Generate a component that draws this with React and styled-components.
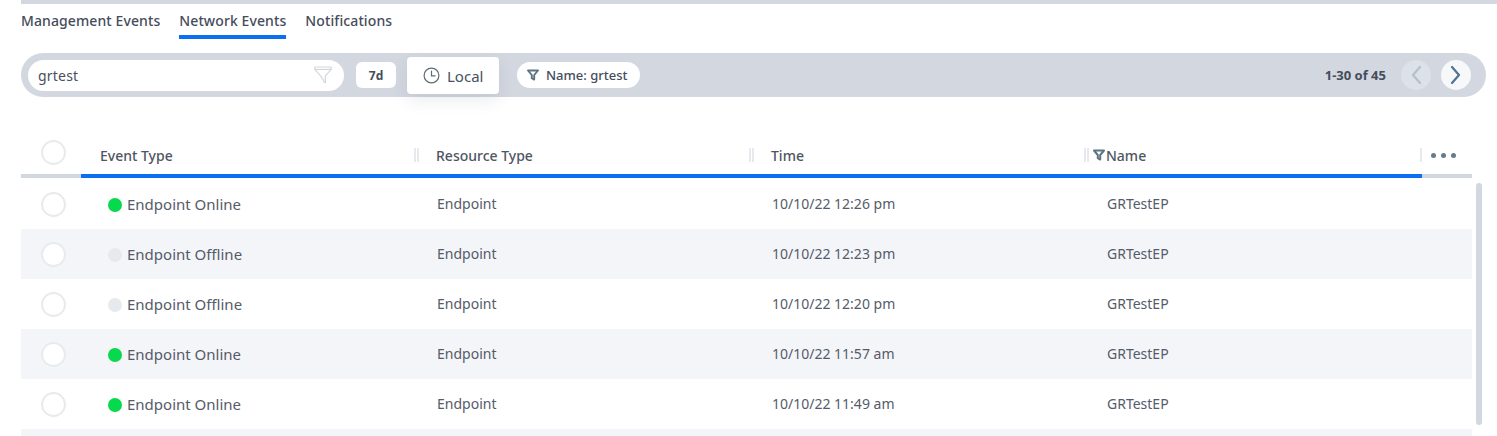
import React from 'react'
import styled, { createGlobalStyle } from 'styled-components'

const rows = [
  { online: true, time: '10/10/22 12:26 pm' },
  { online: false, time: '10/10/22 12:23 pm' },
  { online: false, time: '10/10/22 12:20 pm' },
  { online: true, time: '10/10/22 11:57 am' },
  { online: true, time: '10/10/22 11:49 am' },
]

const GlobalStyle = createGlobalStyle`
  html, body {
    margin: 0;
    height: 436px;
    overflow: hidden;
    background: #fff;
    font-family: "Noto Sans", "Open Sans", sans-serif;
    color: #4a5060;
  }
  * { box-sizing: border-box; }
`

const FunnelIcon = ({ size = 12, color = '#5d7482', stroke = 2, fill = 'none' }) =>
  <svg width={size} height={size} viewBox="0 0 12 12" fill={fill} stroke={color} strokeWidth={stroke} strokeLinejoin="round">
    <path d="M1 1.5h10L7.2 6v4.6L4.8 9.2V6z" />
  </svg>

const SearchFunnel = () =>
  <svg width="18" height="18" viewBox="0 0 18 18" fill="none" stroke="#d3d7dc" strokeWidth="1.2" strokeLinejoin="round">
    <path d="M.8 1h16.4v2.4l-5.8 6.4v7l-1.6-1-.6-2.4-1.2-1-1.4-2.6L.8 3.4z" />
    <path d="M.8 3.4h16.4" />
  </svg>

const ClockIcon = () =>
  <svg width="17" height="17" viewBox="0 0 17 17" fill="none" stroke="#5f6b78" strokeWidth="1.2" strokeLinecap="round">
    <circle cx="8.5" cy="8.5" r="7.4" />
    <path d="M8.5 4.2v4.6h3.6" />
  </svg>

const Chevron = ({ dir, color }) =>
  <svg width="12" height="20" viewBox="0 0 12 20" fill="none" stroke={color} strokeWidth="2.2" strokeLinecap="round" strokeLinejoin="round">
    <path d={dir === 'left' ? 'M10 2L3 10l7 8' : 'M2 2l7 8-7 8'} />
  </svg>

const App = () =>
  <Page>
    <GlobalStyle />
    <TopRule />
    <Tabs>
      <Tab>Management Events</Tab>
      <Tab active>Network Events</Tab>
      <Tab>Notifications</Tab>
    </Tabs>
    <Toolbar>
      <Search>
        <SearchText>grtest</SearchText>
        <SearchFunnel />
      </Search>
      <RangeButton>7d</RangeButton>
      <ZoneButton><ClockIcon />Local</ZoneButton>
      <FilterChip><FunnelIcon size={12} color="#5d7482" stroke={1.9} />Name: grtest</FilterChip>
      <Pager>
        <PageCount>1-30 of 45</PageCount>
        <PageButton disabled><Chevron dir="left" color="#b5c0ca" /></PageButton>
        <PageButton><Chevron dir="right" color="#4f7390" /></PageButton>
      </Pager>
    </Toolbar>
    <HeaderRow>
      <HeaderCheck><Check /></HeaderCheck>
      <HeaderCell>Event Type<Grip /></HeaderCell>
      <HeaderCell>Resource Type<Grip /></HeaderCell>
      <HeaderCell>Time<Grip /></HeaderCell>
      <HeaderCell filtered>
        <HeaderFunnel><FunnelIcon size={12} color="#5d7482" stroke={2} /></HeaderFunnel>
        Name<Grip single />
      </HeaderCell>
      <MoreCell><Dot /><Dot /><Dot /></MoreCell>
    </HeaderRow>
    <HeaderRule><BlueRule /></HeaderRule>
    <Body>
      <Rows>
        {rows.map((row, i) =>
          <Row key={i}>
            <CheckCell><Check /></CheckCell>
            <TypeCell>
              <Status online={row.online} />
              {row.online ? 'Endpoint Online' : 'Endpoint Offline'}
            </TypeCell>
            <Cell>Endpoint</Cell>
            <Cell>{row.time}</Cell>
            <Cell>GRTestEP</Cell>
          </Row>
        )}
        <Row />
      </Rows>
      <Scrollbar />
    </Body>
  </Page>

export default App

const Page = styled.div`
  width: 1497px;
  height: 436px;
  padding: 0 11px 0 21px;
  overflow: hidden;
`

const TopRule = styled.div`
  height: 4px;
  margin-right: -11px;
  background: #d3d7e0;
`

const Tabs = styled.div`
  display: flex;
  gap: 19px;
  height: 35px;
  margin-bottom: 14px;
`

const Tab = styled.div`
  height: 35px;
  padding-top: 7px;
  font-size: 14px;
  line-height: 20px;
  font-weight: 500;
  letter-spacing: 0.1px;
  color: #454c5c;
  border-bottom: 4px solid ${p => p.active ? '#0a6ff0' : 'transparent'};
`

const Toolbar = styled.div`
  display: flex;
  align-items: center;
  width: 1465px;
  height: 44px;
  padding: 0 15px 0 7px;
  border-radius: 22px;
  background: #d3d7e0;
`

const Search = styled.div`
  display: flex;
  align-items: center;
  justify-content: space-between;
  width: 316px;
  height: 31px;
  padding: 0 12px 0 10px;
  border-radius: 16px;
  background: #fff;
`

const SearchText = styled.span`
  font-size: 14px;
  letter-spacing: 0.2px;
  color: #4a5060;
`

const RangeButton = styled.div`
  display: flex;
  align-items: center;
  justify-content: center;
  width: 40px;
  height: 26px;
  margin-left: 12px;
  border-radius: 6px;
  background: #fff;
  font-size: 12px;
  font-weight: 700;
  color: #454c5c;
`

const ZoneButton = styled.div`
  display: flex;
  align-items: center;
  gap: 7px;
  width: 92px;
  height: 37px;
  margin-left: 11px;
  padding: 1px 0 0 16px;
  border-radius: 4px;
  background: #fff;
  font-size: 15px;
  color: #4a5060;
  box-shadow: 0 6px 16px rgba(60, 70, 90, 0.1);
`

const FilterChip = styled.div`
  display: flex;
  align-items: center;
  gap: 7px;
  height: 26px;
  margin-left: 18px;
  padding: 0 12px 0 10px;
  border-radius: 13px;
  background: #fff;
  font-size: 13px;
  font-weight: 500;
  color: #454c5c;
`

const Pager = styled.div`
  display: flex;
  align-items: center;
  margin-left: auto;
`

const PageCount = styled.span`
  margin-right: 15px;
  font-size: 13px;
  font-weight: 700;
  color: #454c5c;
`

const PageButton = styled.button`
  display: flex;
  align-items: center;
  justify-content: center;
  width: 30px;
  height: 30px;
  margin-left: ${p => p.disabled ? 0 : '10px'};
  padding: 0;
  border: 0;
  border-radius: 50%;
  background: ${p => p.disabled ? '#dde1e8' : '#f6f8fa'};
`

const HeaderRow = styled.div`
  display: grid;
  grid-template-columns: 60px 336px repeat(3, 335px) 1fr;
  align-items: center;
  width: 1451px;
  height: 40px;
  margin-top: 37px;
`

const CheckCell = styled.div`
  display: flex;
  justify-content: center;
  padding-left: 4px;
`

const HeaderCheck = styled(CheckCell)`
  margin-top: -4px;
`

const Check = styled.span`
  display: block;
  width: 25px;
  height: 25px;
  border: 2px solid #e8ebee;
  border-radius: 50%;
  background: #fff;
`

const HeaderCell = styled.div`
  position: relative;
  display: flex;
  align-items: center;
  height: 18px;
  margin-top: 2px;
  padding-left: ${p => p.filtered ? '6px' : '19px'};
  font-size: 14px;
  font-weight: 500;
  color: #4f5563;
`

const HeaderFunnel = styled.span`
  display: flex;
  margin-right: 1px;
`

// column resize handle, sits over the cell's right edge
const Grip = styled.span`
  position: absolute;
  top: 2px;
  right: ${p => p.single ? 0 : '-2px'};
  width: ${p => p.single ? '2px' : '5px'};
  height: 14px;
  border-left: 2px solid #e6e9ed;
  border-right: ${p => p.single ? 0 : '2px solid #e6e9ed'};
`

const MoreCell = styled.div`
  display: flex;
  gap: 5px;
  padding-left: 9px;
  margin-top: 2px;
`

const Dot = styled.span`
  width: 5px;
  height: 5px;
  border-radius: 50%;
  background: #647c8a;
`

const HeaderRule = styled.div`
  width: 1451px;
  height: 4px;
  margin-bottom: 1px;
  padding-left: 60px;
  background: #d3d7e0;
`

const BlueRule = styled.div`
  width: 1341px;
  height: 4px;
  background: #0a6ff0;
`

const Body = styled.div`
  display: flex;
  align-items: flex-start;
  gap: 4px;
`

const Rows = styled.div`
  width: 1451px;
`

const Row = styled.div`
  display: grid;
  grid-template-columns: 60px repeat(3, 335px) 1fr;
  align-items: center;
  height: 50px;
  &:nth-child(even) {
    background: #f4f5f9;
  }
`

const Cell = styled.div`
  margin-top: -2px;
  padding-left: 21px;
  font-size: 14px;
  color: #555b69;
`

const TypeCell = styled.div`
  display: flex;
  align-items: center;
  gap: 5px;
  padding-left: 27px;
  font-size: 15px;
  color: #555b69;
`

const Status = styled.span`
  width: 14px;
  height: 14px;
  margin-top: 1px;
  border-radius: 50%;
  background: ${p => p.online ? '#07d94e' : '#e7eaed'};
`

const Scrollbar = styled.div`
  width: 6px;
  height: 242px;
  margin-top: 4px;
  border-radius: 3px;
  background: #d3d7e0;
`
